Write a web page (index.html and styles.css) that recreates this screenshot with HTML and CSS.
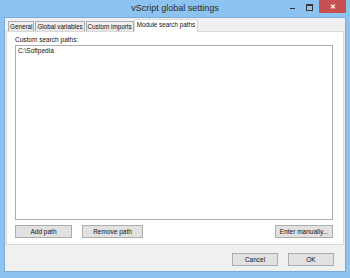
FILE: index.html
```html
<!DOCTYPE html>
<html lang="en">
<head>
  <meta charset="UTF-8">
  <title>vScript global settings</title>
  <link rel="stylesheet" href="styles.css">
</head>
<body>
  <div class="window">
    <div class="titlebar">
      <div class="title">vScript global settings</div>
      <div class="controls">
        <span class="min"></span>
        <span class="max"></span>
        <span class="close">&#x2715;</span>
      </div>
    </div>
    <div class="client">
      <div class="tabs">
        <div class="tab">General</div>
        <div class="tab">Global variables</div>
        <div class="tab">Custom imports</div>
        <div class="tab active">Module search paths</div>
      </div>
      <div class="panel">
        <div class="label">Custom search paths:</div>
        <div class="listbox">
          <div class="item">C:\Softpedia</div>
        </div>
        <div class="row">
          <button class="btn add">Add path</button>
          <button class="btn remove">Remove path</button>
          <button class="btn enter">Enter manually...</button>
        </div>
      </div>
      <div class="footer">
        <button class="btn">Cancel</button>
        <button class="btn">OK</button>
      </div>
    </div>
  </div>
</body>
</html>
```

FILE: styles.css
```css
body {
  margin: 0;
  background-color: #8dc3f0;
  font-family: "Liberation Sans", Arial, sans-serif;
  color: #000;
}
.window {
  width: 350px;
  height: 278px;
  display: flex;
  flex-direction: column;
  background-color: #8dc3f0;
}
.titlebar {
  position: relative;
  height: 17px;
  flex: none;
}
.title {
  text-align: center;
  font-size: 9px;
  line-height: 17px;
  color: #2b2b2b;
}
.controls {
  position: absolute;
  top: 0;
  right: 4px;
  display: flex;
  align-items: flex-start;
}
.min {
  width: 5px;
  height: 1px;
  margin: 8px 11px 0 0;
  background-color: #333;
}
.max {
  width: 5px;
  height: 4px;
  margin: 4px 6px 0 0;
  border: 1px solid #333;
  border-top-width: 2px;
}
.close {
  width: 27px;
  height: 13px;
  background-color: #c75050;
  color: #fff;
  font-size: 7px;
  font-weight: bold;
  line-height: 13px;
  text-align: center;
}
.client {
  flex: 1;
  margin: 0 4px 6px 4px;
  border: 1px solid #79acdb;
  background-color: #f0f0f0;
  display: flex;
  flex-direction: column;
  font-size: 6.5px;
}
.tabs {
  display: flex;
  align-items: flex-end;
  height: 14px;
  padding: 0 0 0 3px;
  flex: none;
  margin-bottom: -1px;
}
.tab {
  height: 10px;
  line-height: 9px;
  padding: 0 1px;
  margin-right: 1px;
  border: 1px solid #acacac;
  border-bottom: none;
  background: linear-gradient(#f0f0f0, #e5e5e5);
  color: #111;
  font-size: 6.3px;
}
.tab.active {
  position: relative;
  z-index: 1;
  height: 12px;
  line-height: 10px;
  padding: 0 2px;
  margin-left: -1px;
  background: #fff;
  border-color: #d9d9d9;
}
.panel {
  box-sizing: border-box;
  flex: none;
  height: 214px;
  margin: 0 1px;
  border: 1px solid #d9d9d9;
  background-color: #fff;
  display: flex;
  flex-direction: column;
  padding: 4px 10px 6px 8px;
}
.label {
  line-height: 8px;
  color: #111;
}
.listbox {
  flex: 1;
  margin-top: 1px;
  border: 1px solid #abadb3;
  padding: 1px 2px;
}
.item {
  line-height: 8px;
  color: #111;
}
.row {
  display: flex;
  gap: 10px;
  margin-top: 5px;
}
.btn {
  height: 13px;
  padding: 0;
  border: 1px solid #adadad;
  background-color: #e1e1e1;
  font-family: "Liberation Sans", Arial, sans-serif;
  font-size: 6.5px;
  color: #111;
}
.add {
  width: 57px;
}
.remove {
  width: 61px;
}
.enter {
  width: 58px;
  margin-left: auto;
}
.footer {
  flex: 1;
  display: flex;
  justify-content: flex-end;
  align-items: flex-start;
  gap: 10px;
  padding: 8px 11px 0 0;
}
.footer .btn {
  width: 46px;
}
```
